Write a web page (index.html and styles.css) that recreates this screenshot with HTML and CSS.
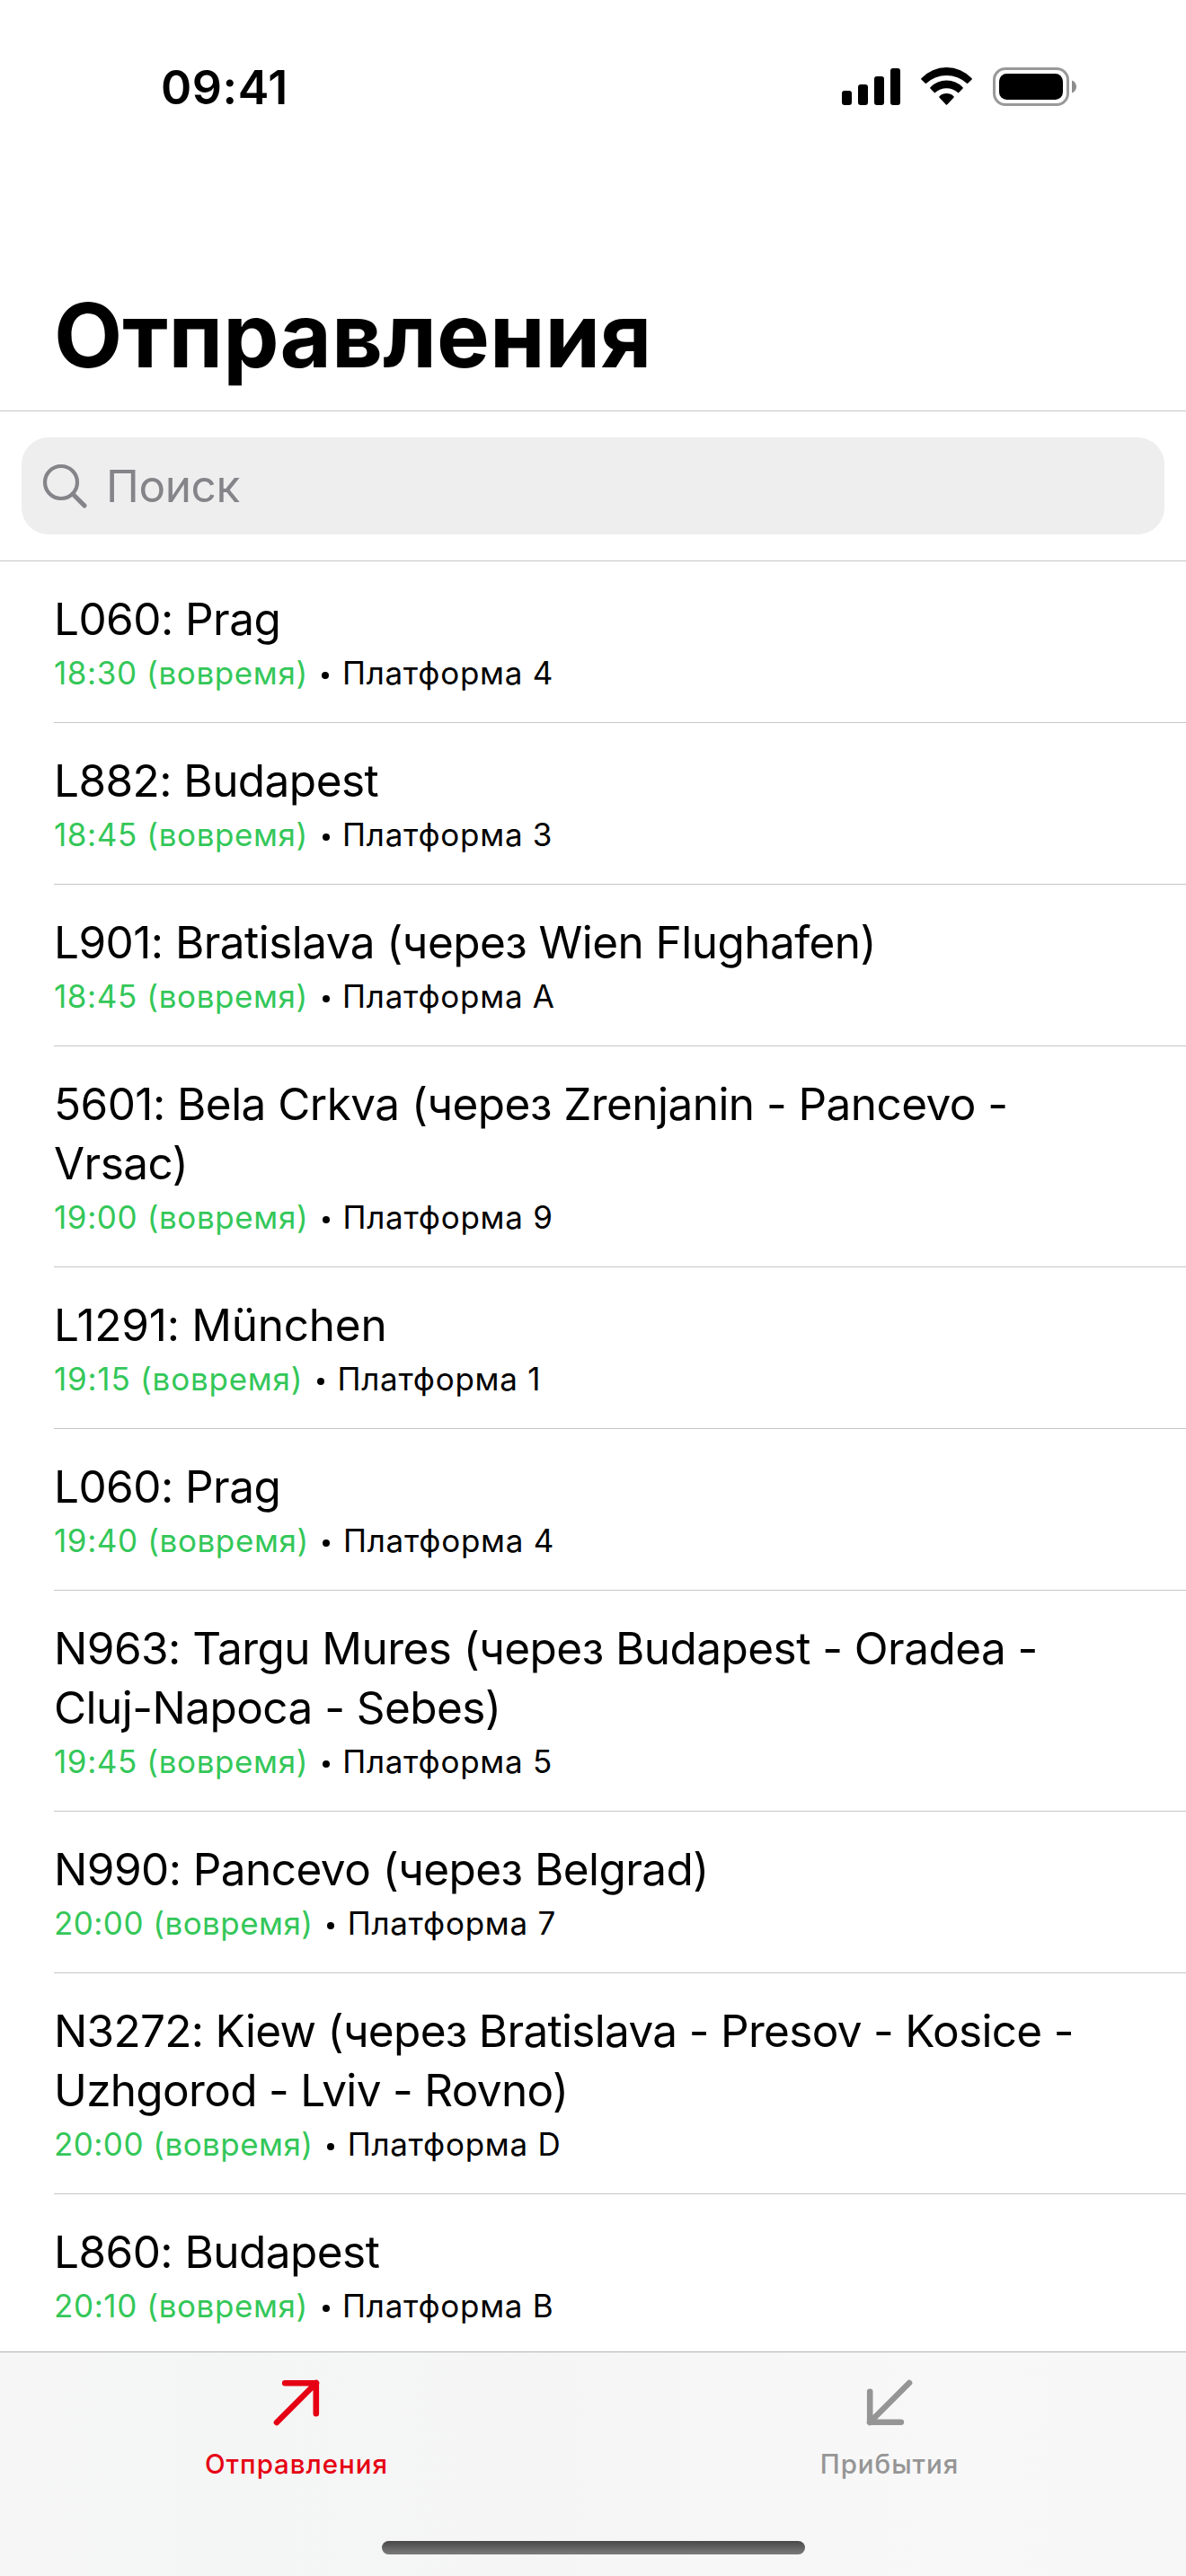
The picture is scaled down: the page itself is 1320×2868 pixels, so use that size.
FILE: index.html
```
<!DOCTYPE html>
<html lang="ru">
<head>
<meta charset="utf-8">
<title>Отправления</title>
<link rel="stylesheet" href="styles.css">
</head>
<body>
<div class="screen">
  <header class="status-bar">
    <span class="clock">09:41</span>
    <div class="status-icons">
      <svg class="signal" width="65" height="42" viewBox="0 0 65 42">
        <rect x="0" y="26" width="11" height="16" rx="3"/>
        <rect x="18" y="19" width="11" height="23" rx="3"/>
        <rect x="36" y="10" width="11" height="32" rx="3"/>
        <rect x="54" y="1" width="11" height="41" rx="3"/>
      </svg>
      <svg class="wifi" width="57" height="42" viewBox="0 0 57 42">
        <path d="M0.4 12.2A38.7 38.7 0 0 1 56.6 12.2Q57.2 12.9 56.6 13.5L52.2 17.8Q51.6 18.3 51 17.8A33 33 0 0 0 6 17.8Q5.4 18.3 4.8 17.8L0.4 13.5Q-.2 12.9 .4 12.2Z"/>
        <path d="M10.4 22.2A25.4 25.4 0 0 1 46.6 22.2Q47.2 22.9 46.6 23.5L42.2 28.1Q41.6 28.7 41 28.1A18.4 18.4 0 0 0 16 28.1Q15.4 28.7 14.8 28.1L10.4 23.5Q9.8 22.9 10.4 22.2Z"/>
        <path d="M20.4 32.4A11.6 11.6 0 0 1 36.6 32.4Q37.2 33 36.6 33.6L29.1 41.5Q28.5 42 27.9 41.5L20.4 33.6Q19.8 33 20.4 32.4Z"/>
      </svg>
      <svg class="battery" width="94" height="43" viewBox="0 0 94 43">
        <rect x="1.5" y="1.5" width="82" height="40" rx="12.5" fill="none" stroke="#999" stroke-width="3"/>
        <rect x="7" y="7" width="71" height="29" rx="8.5"/>
        <path d="M88 14.5C91 15.6 93 18.3 93 21.5S91 27.4 88 28.5Z" fill="#8c8c8c"/>
      </svg>
    </div>
  </header>

  <h1 class="page-title">Отправления</h1>

  <div class="search-area">
    <div class="search-field">
      <svg class="search-icon" width="52" height="52" viewBox="0 0 52 52">
        <circle cx="22" cy="22" r="18" fill="none" stroke="#848489" stroke-width="4.2"/>
        <path d="M35 35L48 48" stroke="#848489" stroke-width="5.2" stroke-linecap="round"/>
      </svg>
      <span class="placeholder">Поиск</span>
    </div>
  </div>

  <main class="departures">
    <div class="row"><p class="route">L060: Prag</p><p class="detail"><span class="on-time">18:30 (вовремя)</span> <i class="dot"></i> Платформа 4</p></div>
    <div class="row"><p class="route">L882: Budapest</p><p class="detail"><span class="on-time">18:45 (вовремя)</span> <i class="dot"></i> Платформа 3</p></div>
    <div class="row"><p class="route">L901: Bratislava (через Wien Flughafen)</p><p class="detail"><span class="on-time">18:45 (вовремя)</span> <i class="dot"></i> Платформа A</p></div>
    <div class="row"><p class="route">5601: Bela Crkva (через Zrenjanin - Pancevo -<br>Vrsac)</p><p class="detail"><span class="on-time">19:00 (вовремя)</span> <i class="dot"></i> Платформа 9</p></div>
    <div class="row"><p class="route route-loose">L1291: München</p><p class="detail"><span class="on-time on-time-loose">19:15 (вовремя)</span> <i class="dot"></i> Платформа 1</p></div>
    <div class="row"><p class="route">L060: Prag</p><p class="detail"><span class="on-time">19:40 (вовремя)</span> <i class="dot"></i> Платформа 4</p></div>
    <div class="row"><p class="route">N963: Targu Mures (через Budapest - Oradea -<br>Cluj-Napoca - Sebes)</p><p class="detail"><span class="on-time">19:45 (вовремя)</span> <i class="dot"></i> Платформа 5</p></div>
    <div class="row"><p class="route">N990: Pancevo (через Belgrad)</p><p class="detail"><span class="on-time on-time-tight">20:00 (вовремя)</span> <i class="dot"></i> Платформа 7</p></div>
    <div class="row"><p class="route route-tight">N3272: Kiew (через Bratislava - Presov - Kosice -<br>Uzhgorod - Lviv - Rovno)</p><p class="detail"><span class="on-time on-time-tight">20:00 (вовремя)</span> <i class="dot"></i> Платформа D</p></div>
    <div class="row"><p class="route">L860: Budapest</p><p class="detail"><span class="on-time">20:10 (вовремя)</span> <i class="dot"></i> Платформа B</p></div>
  </main>

  <nav class="tab-bar">
    <div class="tabs">
      <div class="tab tab-active">
        <svg width="52" height="52" viewBox="0 0 52 52"><path d="M4 48L48 4M13.2 4.2H47.8V38.3"/></svg>
        <span>Отправления</span>
      </div>
      <div class="tab">
        <svg width="52" height="52" viewBox="0 0 52 52"><path d="M48 4L4 48M4.2 13.7V47.8H38.8"/></svg>
        <span>Прибытия</span>
      </div>
    </div>
    <div class="home-indicator"></div>
  </nav>
</div>
</body>
</html>
```
FILE: styles.css
```
* {
  box-sizing: border-box;
  margin: 0;
  padding: 0;
}

body {
  background: #fff;
  color: #000;
  font-family: Inter, "Noto Sans", sans-serif;
}

svg {
  display: block;
}

.screen {
  display: flex;
  flex-direction: column;
  width: 1320px;
  height: 2868px;
  overflow: hidden;
}

.status-bar {
  display: flex;
  justify-content: space-between;
  align-items: flex-start;
  height: 186px;
  padding: 66px 121px 0 179px;
}

.clock {
  font-size: 52px;
  font-weight: 600;
  line-height: 64px;
  letter-spacing: 0.5px;
}

.status-icons {
  display: flex;
  gap: 23px;
  padding-top: 9px;
}

.page-title {
  height: 272px;
  padding: 127px 60px 0;
  border-bottom: 1px solid #c6c6c8;
  font-size: 99px;
  font-weight: 700;
  line-height: 120px;
}

.search-area {
  flex: none;
  height: 167px;
  padding: 29px 24px 0;
  border-bottom: 1px solid #c6c6c8;
}

.search-field {
  display: flex;
  align-items: center;
  gap: 20px;
  height: 108px;
  padding-left: 22px;
  border-radius: 30px;
  background: #eeeeef;
}

.placeholder {
  color: #848489;
  font-size: 49.5px;
  line-height: 66px;
  letter-spacing: -0.4px;
}

.departures {
  flex: none;
  height: 1993px;
  overflow: hidden;
  padding-left: 60px;
}

.row {
  padding: 31px 0 33px;
  border-bottom: 1px solid #c6c6c8;
}

.route {
  font-size: 49.5px;
  line-height: 66px;
  letter-spacing: -0.55px;
}

.route-tight {
  letter-spacing: -0.69px;
}

.route-loose {
  letter-spacing: -0.25px;
}

.detail {
  padding-top: 5px;
  font-size: 35px;
  line-height: 44px;
  letter-spacing: 0.72px;
}

.on-time {
  color: #34c759;
  letter-spacing: 0.6px;
}

.on-time-loose {
  letter-spacing: 0.78px;
}

.on-time-tight {
  letter-spacing: 0.45px;
}

.dot {
  display: inline-block;
  width: 8px;
  height: 8px;
  margin: 0 4px 6px 5px;
  border-radius: 50%;
  background: #000;
}

.tab-bar {
  display: flex;
  flex: none;
  flex-direction: column;
  align-items: center;
  justify-content: space-between;
  height: 250px;
  padding-bottom: 24px;
  border-top: 1px solid #b2b2b2;
  background: linear-gradient(90deg, #f6f6f6 0, #f4f6f5 18%, #f5f5f5 45%, #f8f8f8 80%, #f7f7f7 100%);
}

.tabs {
  display: grid;
  grid-template-columns: 1fr 1fr;
  width: 100%;
}

.tab {
  display: flex;
  flex-direction: column;
  align-items: center;
  gap: 22px;
  padding-top: 30px;
  color: #959595;
  font-size: 29.5px;
  font-weight: 500;
  line-height: 40px;
  letter-spacing: 0.95px;
}

.tab-active {
  color: #e60013;
}

.tab path {
  fill: none;
  stroke: currentColor;
  stroke-width: 6.6;
  stroke-linecap: round;
  stroke-linejoin: round;
}

.home-indicator {
  width: 471px;
  height: 15px;
  border-radius: 8px;
  background: linear-gradient(#484848, #7b7b7b);
}
```
